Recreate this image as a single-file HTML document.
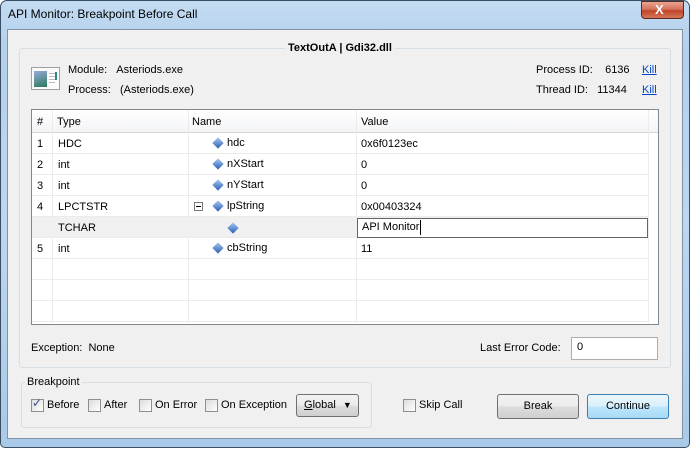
<!DOCTYPE html>
<html><head><style>
*{margin:0;padding:0;box-sizing:border-box}
body{width:699px;height:449px;background:#fff;position:relative;overflow:hidden;font-family:"Liberation Sans",sans-serif;font-size:11px;color:#000}
.abs{position:absolute}
#frame{left:0;top:0;width:690px;height:448px;border:1px solid #3a4d63;border-radius:7px 7px 5px 5px;background:linear-gradient(180deg,#c4dcf2 0%,#b3d0ec 10%,#bcd7ef 50%,#a9c9e8 100%)}
#client{left:7px;top:29px;width:676px;height:410px;background:#f0f0f0;border:1px solid #7f93a8}
.t{position:absolute;white-space:nowrap}
.grp{position:absolute;border:1px solid #d5dfe5;border-radius:3px}
.cb{position:absolute;width:13px;height:13px;border:1px solid #8f8f8f;background:linear-gradient(135deg,#dcdcdc,#fff)}
.btn{position:absolute;border:1px solid #707070;border-radius:3px;background:linear-gradient(180deg,#f2f2f2 0%,#ebebeb 50%,#dddddd 51%,#cfcfcf 100%);text-align:center;line-height:22px}
.row{position:absolute;left:32px;width:616px;height:21px;border-bottom:1px solid #ececec}
.vl{position:absolute;top:110px;width:1px;height:213px;background:#ececec}
.dia{position:absolute;width:8px;height:8px;background:linear-gradient(135deg,#a8c8f0,#2a5fb5);transform:rotate(45deg)}
</style></head><body>
<div id="frame" class="abs"></div>
<div class="t" style="left:8px;top:7px;font-size:12px;color:#000">API Monitor: Breakpoint Before Call</div>
<div class="abs" style="left:641px;top:1px;width:43px;height:18px;border:1px solid #5a2a20;border-radius:0 0 4px 4px;background:linear-gradient(180deg,#e8a493 0%,#d4735c 45%,#c0462a 55%,#d4765a 100%)"></div>
<div class="t" style="left:655px;top:2px;color:#fff;font-weight:bold;font-size:13px">X</div>
<div id="client" class="abs"></div>

<div class="grp" style="left:19px;top:48px;width:652px;height:320px"></div>
<div class="t" style="left:285px;top:42px;background:#f0f0f0;padding:0 3px;font-weight:bold">TextOutA | Gdi32.dll</div>

<div class="abs" style="left:31px;top:67px;width:29px;height:23px;border:1px solid #a0a0a0;background:#fafafa"></div>
<div class="abs" style="left:34px;top:71px;width:13px;height:16px;background:linear-gradient(160deg,#9ad,#2a7a5a)"></div>
<div class="abs" style="left:49px;top:73px;width:6px;height:12px;background:repeating-linear-gradient(180deg,#bbb 0 1px,#fff 1px 3px)"></div>
<div class="abs" style="left:55px;top:72px;width:2px;height:8px;background:#2a8a8a"></div>
<div class="t" style="left:68px;top:64px">Module:&nbsp;&nbsp;&nbsp;Asteriods.exe</div>
<div class="t" style="left:68px;top:84px">Process:&nbsp;&nbsp;&nbsp;(Asteriods.exe)</div>
<div class="t" style="left:536px;top:64px">Process ID:&nbsp;&nbsp;&nbsp;&nbsp;6136</div>
<div class="t" style="left:642px;top:64px;color:#0645c8;text-decoration:underline">Kill</div>
<div class="t" style="left:536px;top:84px">Thread ID:&nbsp;&nbsp;&nbsp;11344</div>
<div class="t" style="left:642px;top:84px;color:#0645c8;text-decoration:underline">Kill</div>

<div class="abs" style="left:31px;top:109px;width:628px;height:216px;border:1px solid #828790;background:#fff"></div>
<div class="abs" style="left:32px;top:110px;width:626px;height:23px;background:linear-gradient(180deg,#fff,#f3f4f6);border-bottom:1px solid #d5d5d5"></div>
<div class="vl" style="left:52px"></div><div class="vl" style="left:188px"></div><div class="vl" style="left:356px"></div><div class="vl" style="left:648px"></div>
<div class="t" style="left:37px;top:116px">#</div>
<div class="t" style="left:57px;top:116px">Type</div>
<div class="t" style="left:192px;top:116px">Name</div>
<div class="t" style="left:361px;top:116px">Value</div>

<div class="row" style="top:133px"></div>
<div class="row" style="top:154px"></div>
<div class="row" style="top:175px"></div>
<div class="row" style="top:196px"></div>
<div class="row" style="top:217px;background:#f0f0f0"></div>
<div class="row" style="top:238px"></div>
<div class="row" style="top:259px"></div>
<div class="row" style="top:280px"></div>
<div class="row" style="top:301px"></div>

<div class="t" style="left:37px;top:138px">1</div><div class="t" style="left:58px;top:138px">HDC</div><div class="dia" style="left:214px;top:139px"></div><div class="t" style="left:227px;top:137px">hdc</div><div class="t" style="left:361px;top:138px">0x6f0123ec</div>
<div class="t" style="left:37px;top:159px">2</div><div class="t" style="left:58px;top:159px">int</div><div class="dia" style="left:214px;top:160px"></div><div class="t" style="left:227px;top:158px">nXStart</div><div class="t" style="left:361px;top:159px">0</div>
<div class="t" style="left:37px;top:180px">3</div><div class="t" style="left:58px;top:180px">int</div><div class="dia" style="left:214px;top:181px"></div><div class="t" style="left:227px;top:179px">nYStart</div><div class="t" style="left:361px;top:180px">0</div>
<div class="t" style="left:37px;top:201px">4</div><div class="t" style="left:58px;top:201px">LPCTSTR</div>
<div class="abs" style="left:194px;top:202px;width:9px;height:9px;border:1px solid #7a7a7a;background:#fff"></div><div class="abs" style="left:196px;top:206px;width:5px;height:1px;background:#000"></div>
<div class="dia" style="left:214px;top:202px"></div><div class="t" style="left:227px;top:200px">lpString</div><div class="t" style="left:361px;top:201px">0x00403324</div>
<div class="t" style="left:58px;top:222px">TCHAR</div><div class="dia" style="left:229px;top:224px"></div>
<div class="abs" style="left:357px;top:218px;width:291px;height:20px;border:1px solid #646464;background:#fff"></div>
<div class="t" style="left:362px;top:221px">API Monitor</div><div class="abs" style="left:420px;top:220px;width:1px;height:15px;background:#000"></div>
<div class="t" style="left:37px;top:243px">5</div><div class="t" style="left:58px;top:243px">int</div><div class="dia" style="left:214px;top:244px"></div><div class="t" style="left:227px;top:242px">cbString</div><div class="t" style="left:361px;top:243px">11</div>

<div class="t" style="left:31px;top:342px">Exception:&nbsp;&nbsp;None</div>
<div class="t" style="left:480px;top:342px">Last Error Code:</div>
<div class="abs" style="left:571px;top:337px;width:87px;height:23px;border:1px solid #abadb3;background:#fff"></div>
<div class="t" style="left:577px;top:341px">0</div>

<div class="grp" style="left:21px;top:382px;width:351px;height:46px"></div>
<div class="t" style="left:25px;top:376px;background:#f0f0f0;padding:0 2px">Breakpoint</div>
<div class="cb" style="left:31px;top:399px"></div><div class="t" style="left:32px;top:396px;color:#3a4f8a;font-size:12px">✓</div><div class="t" style="left:47px;top:399px">Before</div>
<div class="cb" style="left:88px;top:399px"></div><div class="t" style="left:104px;top:399px">After</div>
<div class="cb" style="left:139px;top:399px"></div><div class="t" style="left:155px;top:399px">On Error</div>
<div class="cb" style="left:205px;top:399px"></div><div class="t" style="left:221px;top:399px">On Exception</div>
<div class="btn" style="left:296px;top:394px;width:63px;height:23px;text-align:left;padding-left:7px;line-height:21px"><u>G</u>lobal <span style="font-size:9px;margin-left:4px">▼</span></div>
<div class="cb" style="left:403px;top:399px"></div><div class="t" style="left:419px;top:399px">Skip Call</div>
<div class="btn" style="left:497px;top:394px;width:82px;height:25px">Break</div>
<div class="btn" style="left:587px;top:394px;width:82px;height:25px;border-color:#3c7fb1;background:linear-gradient(180deg,#eaf6fd 0%,#d9f0fc 50%,#bee6fd 51%,#a7d9f5 100%)">Continue</div>
</body></html>
